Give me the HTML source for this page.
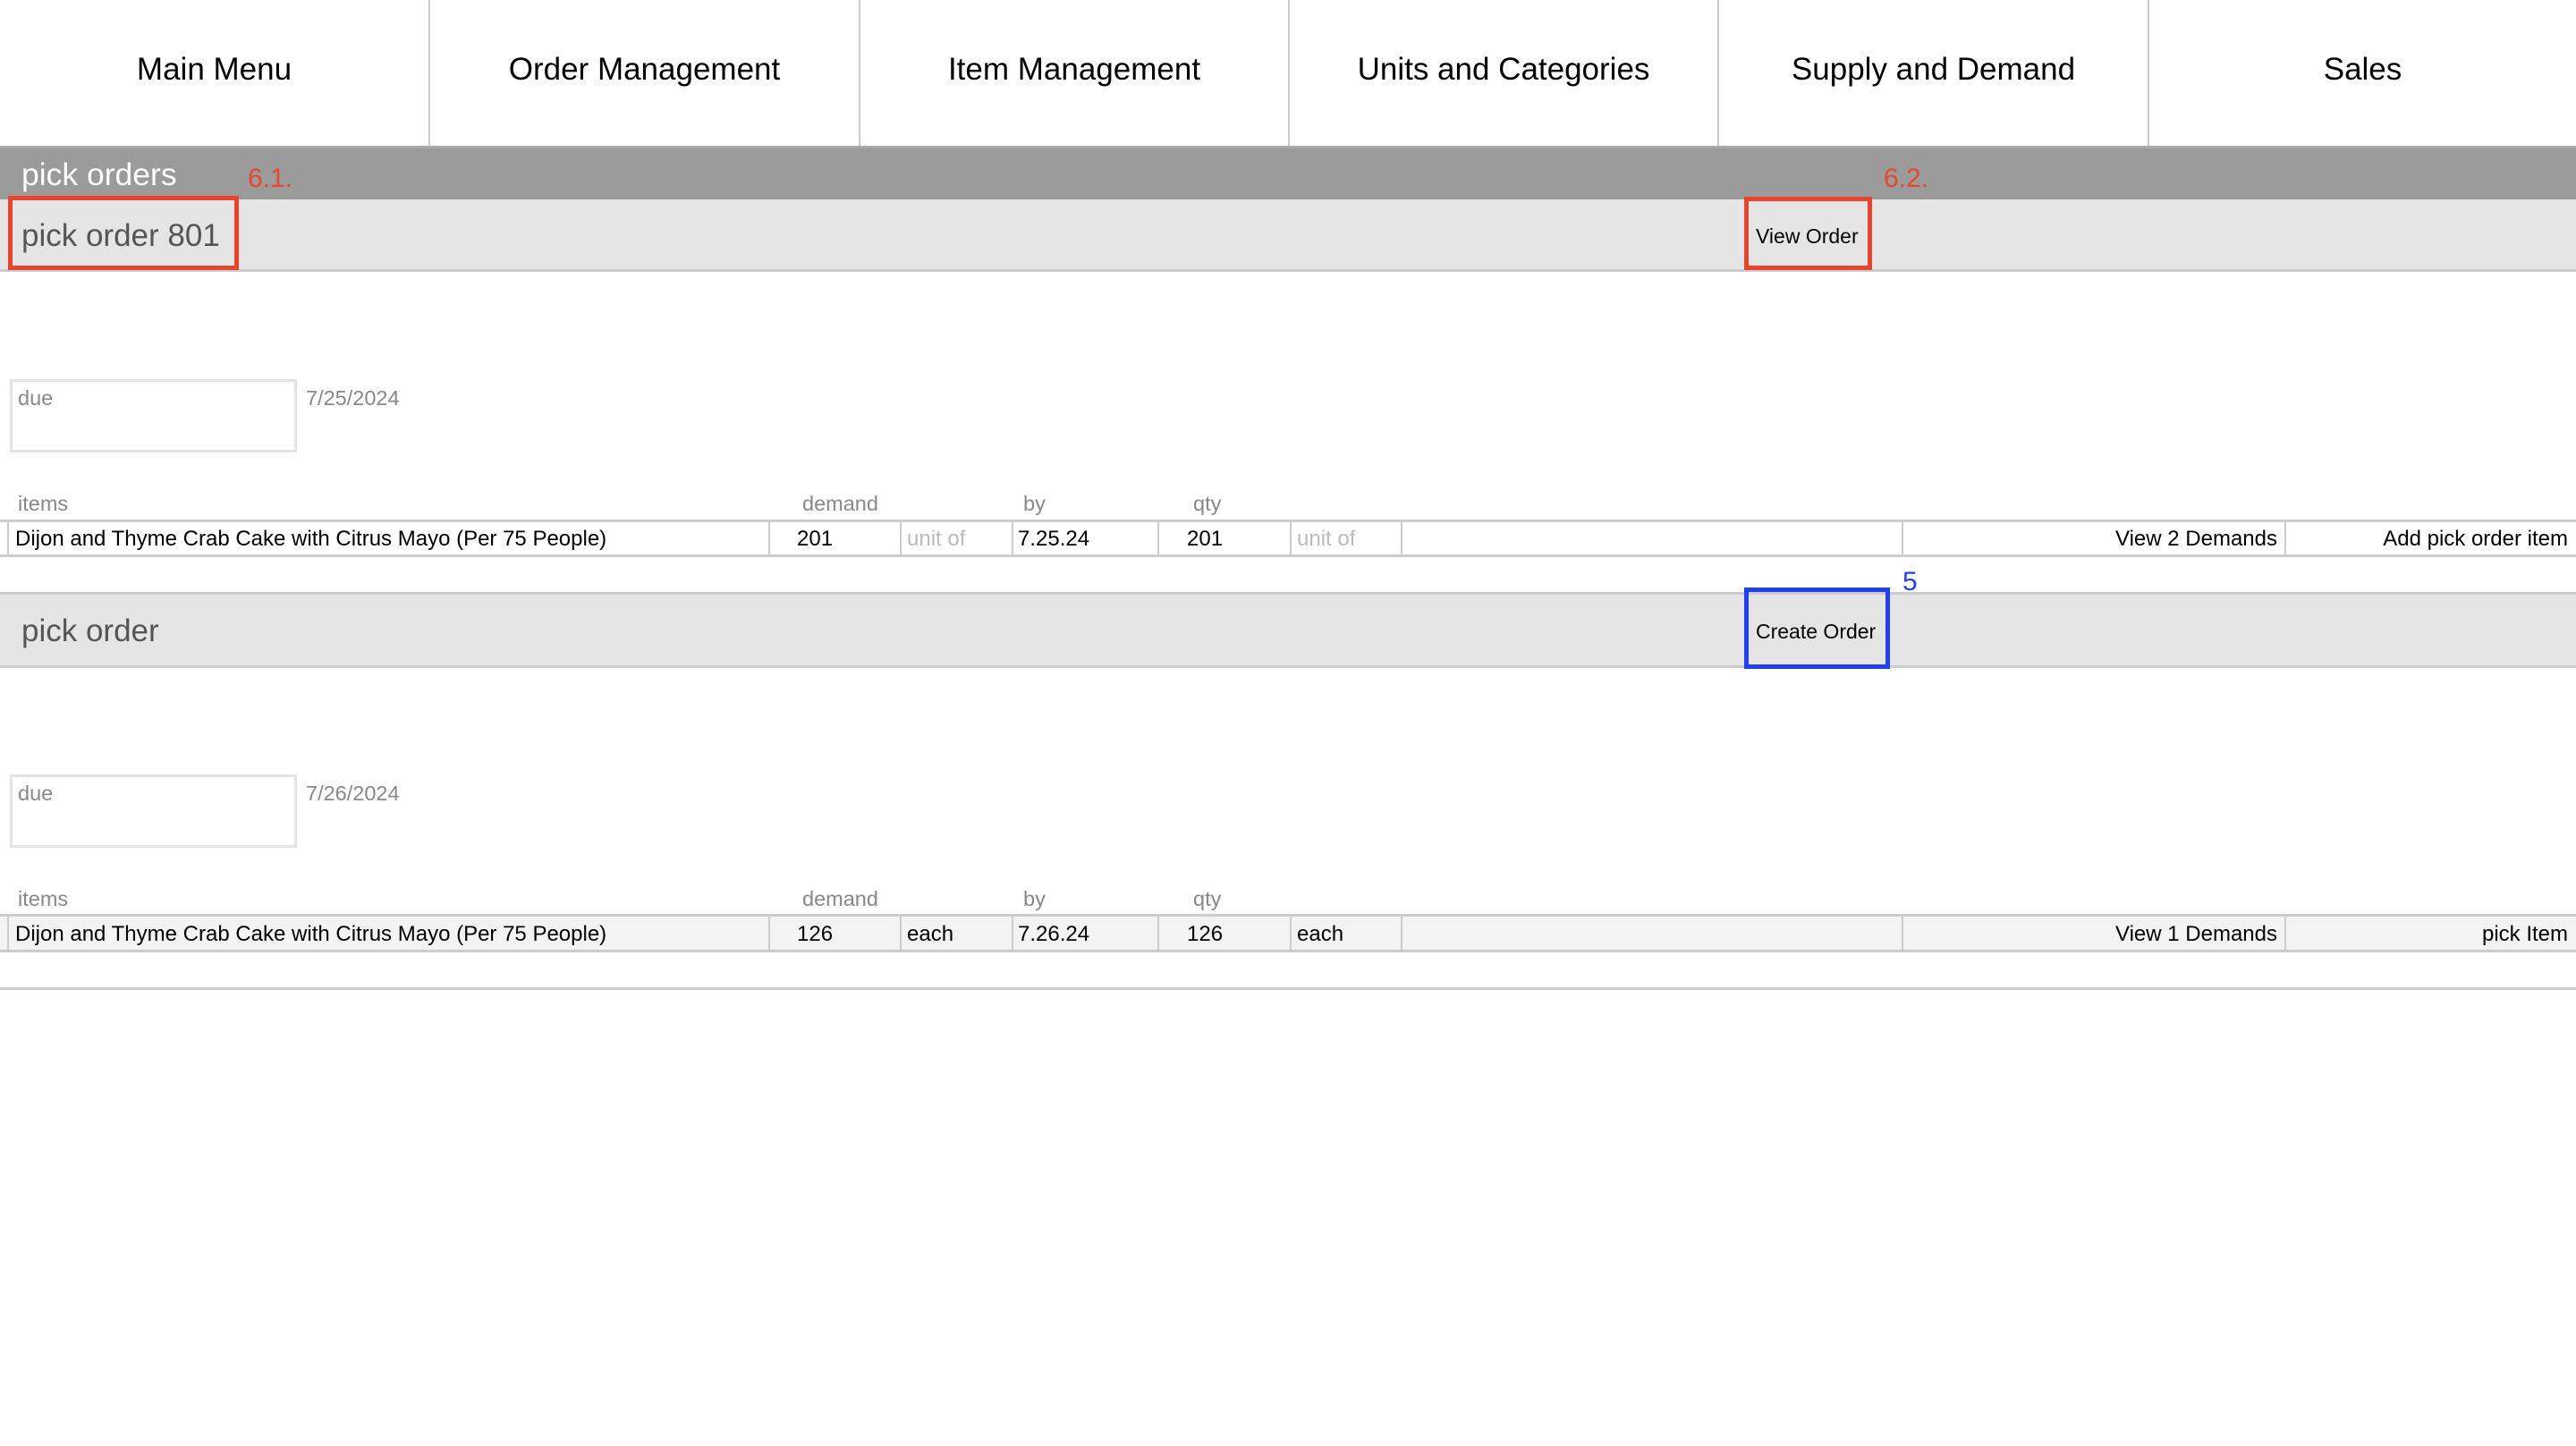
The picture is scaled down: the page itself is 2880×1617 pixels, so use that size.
<!DOCTYPE html>
<html><head><meta charset="utf-8"><style>
*{margin:0;padding:0;box-sizing:border-box}
body{width:2880px;height:1617px;background:#fff;font-family:"Liberation Sans",Arial,sans-serif;position:relative;overflow:hidden}
.a{position:absolute;white-space:nowrap}
.r{position:absolute;white-space:nowrap;text-align:right}
.nav{position:absolute;top:0;height:163px;border-right:2px solid #ccc;display:flex;align-items:center;justify-content:center;font-size:35px;color:#000;padding-bottom:8px}
.hl{position:absolute;left:0;width:2880px;background:#ccc;height:3px}
.vl{position:absolute;width:2px;background:#ccc}
.lbl{color:#888;font-size:23.5px}
.cell{font-size:24px;color:#000}
</style></head><body>
<div class="nav" style="left:0;width:481px">Main Menu</div>
<div class="nav" style="left:481px;width:481px">Order Management</div>
<div class="nav" style="left:962px;width:480px">Item Management</div>
<div class="nav" style="left:1442px;width:480px">Units and Categories</div>
<div class="nav" style="left:1922px;width:481px">Supply and Demand</div>
<div class="nav" style="left:2403px;width:477px;border-right:none">Sales</div>

<div class="a" style="left:0;top:163px;width:2880px;height:60px;background:#9b9b9b;border-top:3px solid #aaa"></div>
<div class="a" style="left:24px;top:175px;font-size:35.5px;color:#fff">pick orders</div>
<div class="a" style="left:277px;top:183px;font-size:30px;color:#e8452c">6.1.</div>
<div class="a" style="left:2106px;top:183px;font-size:30px;color:#e8452c">6.2.</div>

<div class="a" style="left:0;top:223px;width:2880px;height:81px;background:#e5e5e5;border-bottom:3px solid #ccc"></div>
<div class="a" style="left:9px;top:219px;width:258px;height:83px;border:5px solid #e8452c"></div>
<div class="a" style="left:24px;top:244px;font-size:35px;color:#555">pick order 801</div>
<div class="a" style="left:1950px;top:220px;width:143px;height:82px;border:5px solid #e8452c"></div>
<div class="a" style="left:1963px;top:251px;font-size:23px;color:#000">View Order</div>

<div class="a" style="left:11px;top:424px;width:321px;height:82px;border:3px solid #e3e3e3"></div>
<div class="a lbl" style="left:20px;top:432px">due</div>
<div class="a lbl" style="left:342px;top:432px">7/25/2024</div>

<div class="a lbl" style="left:20px;top:550px">items</div>
<div class="a lbl" style="left:897px;top:550px">demand</div>
<div class="a lbl" style="left:1144px;top:550px">by</div>
<div class="a lbl" style="left:1334px;top:550px">qty</div>
<div class="hl" style="top:581px"></div>
<div class="hl" style="top:620px"></div>
<div class="vl" style="left:8px;top:581px;height:40px"></div>
<div class="vl" style="left:859px;top:581px;height:40px"></div>
<div class="vl" style="left:1006px;top:581px;height:40px"></div>
<div class="vl" style="left:1131px;top:581px;height:40px"></div>
<div class="vl" style="left:1294px;top:581px;height:40px"></div>
<div class="vl" style="left:1442px;top:581px;height:40px"></div>
<div class="vl" style="left:1566px;top:581px;height:40px"></div>
<div class="vl" style="left:2126px;top:581px;height:40px"></div>
<div class="vl" style="left:2554px;top:581px;height:40px"></div>
<div class="a cell" style="left:17px;top:589px">Dijon and Thyme Crab Cake with Citrus Mayo (Per 75 People)</div>
<div class="a cell" style="left:891px;top:589px">201</div>
<div class="a cell" style="left:1014px;top:589px;color:#bbb">unit of</div>
<div class="a cell" style="left:1138px;top:589px">7.25.24</div>
<div class="a cell" style="left:1327px;top:589px">201</div>
<div class="a cell" style="left:1450px;top:589px;color:#bbb">unit of</div>
<div class="r cell" style="right:334px;top:589px">View 2 Demands</div>
<div class="r cell" style="right:9px;top:589px">Add pick order item</div>

<div class="a" style="left:2127px;top:634px;font-size:30px;color:#2340f0">5</div>
<div class="a" style="left:0;top:662px;width:2880px;height:85px;background:#e5e5e5;border-top:3px solid #ccc;border-bottom:3px solid #ccc"></div>
<div class="a" style="left:24px;top:686px;font-size:35px;color:#555">pick order</div>
<div class="a" style="left:1950px;top:657px;width:163px;height:91px;border:5px solid #2340f0"></div>
<div class="a" style="left:1963px;top:693px;font-size:23px;color:#000">Create Order</div>

<div class="a" style="left:11px;top:866px;width:321px;height:82px;border:3px solid #e3e3e3"></div>
<div class="a lbl" style="left:20px;top:874px">due</div>
<div class="a lbl" style="left:342px;top:874px">7/26/2024</div>

<div class="a lbl" style="left:20px;top:992px">items</div>
<div class="a lbl" style="left:897px;top:992px">demand</div>
<div class="a lbl" style="left:1144px;top:992px">by</div>
<div class="a lbl" style="left:1334px;top:992px">qty</div>
<div class="a" style="left:0;top:1023px;width:2880px;height:41px;background:#f3f3f3"></div>
<div class="hl" style="top:1022px"></div>
<div class="hl" style="top:1062px"></div>
<div class="vl" style="left:8px;top:1022px;height:41px"></div>
<div class="vl" style="left:859px;top:1022px;height:41px"></div>
<div class="vl" style="left:1006px;top:1022px;height:41px"></div>
<div class="vl" style="left:1131px;top:1022px;height:41px"></div>
<div class="vl" style="left:1294px;top:1022px;height:41px"></div>
<div class="vl" style="left:1442px;top:1022px;height:41px"></div>
<div class="vl" style="left:1566px;top:1022px;height:41px"></div>
<div class="vl" style="left:2126px;top:1022px;height:41px"></div>
<div class="vl" style="left:2554px;top:1022px;height:41px"></div>
<div class="a cell" style="left:17px;top:1031px">Dijon and Thyme Crab Cake with Citrus Mayo (Per 75 People)</div>
<div class="a cell" style="left:891px;top:1031px">126</div>
<div class="a cell" style="left:1014px;top:1031px">each</div>
<div class="a cell" style="left:1138px;top:1031px">7.26.24</div>
<div class="a cell" style="left:1327px;top:1031px">126</div>
<div class="a cell" style="left:1450px;top:1031px">each</div>
<div class="r cell" style="right:334px;top:1031px">View 1 Demands</div>
<div class="r cell" style="right:9px;top:1031px">pick Item</div>

<div class="hl" style="top:1104px"></div>
</body></html>
